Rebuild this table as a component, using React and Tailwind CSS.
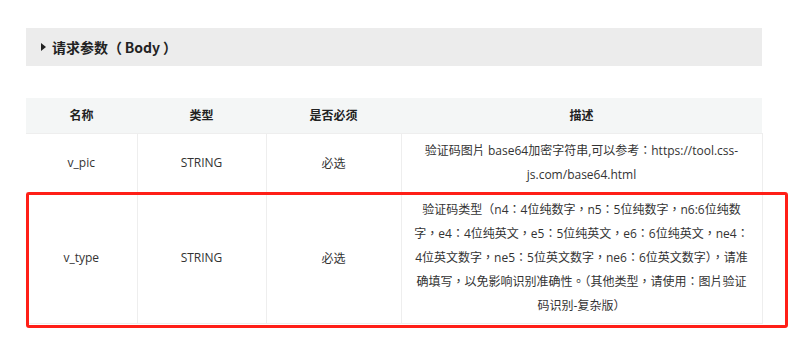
export default function App() {
  const font = { fontFamily: '"Noto Sans CJK SC", sans-serif' };
  const tc = { fontFamily: '"Open Sans", "Noto Sans CJK TC", sans-serif' };
  return (
    <div className="relative w-[799px] h-[340px] bg-white pt-[28px] pl-[26px] text-[#333]" style={font}>
      <div className="w-[736px] h-[38px] bg-[#ececec] flex items-center pl-[15px]">
        <span className="inline-block w-0 h-0 border-y-[4.5px] border-y-transparent border-l-[5px] border-l-[#222] mr-[6px]"></span>
        <span className="text-[14px] font-bold text-[#222] leading-none" style={{ fontFamily: '"Noto Sans CJK TC", sans-serif' }}>{"请求参数（\u2009Body\u2009）"}</span>
      </div>
      <table className="mt-[32px] w-[736px] border-collapse text-[12px] leading-[24px] text-center table-fixed">
        <colgroup>
          <col className="w-[111px]" />
          <col className="w-[129px]" />
          <col className="w-[135px]" />
          <col className="w-[361px]" />
        </colgroup>
        <thead>
          <tr className="bg-[#f4f6f6] h-[35px]">
            <th className="font-bold text-[#222] border-[#eeeeee] border-b">名称</th>
            <th className="font-bold text-[#222] border-[#eeeeee] border-b">类型</th>
            <th className="font-bold text-[#222] border-[#eeeeee] border-b">是否必须</th>
            <th className="font-bold text-[#222] border-[#eeeeee] border-b">描述</th>
          </tr>
        </thead>
        <tbody>
          <tr className="h-[59px]">
            <td className="border border-[#eeeeee] border-l-0" style={tc}>v_pic</td>
            <td className="border border-[#eeeeee]" style={tc}>STRING</td>
            <td className="border border-[#eeeeee]">必选</td>
            <td className="border border-[#eeeeee] py-[5px] px-[10px]" style={tc}>
              验证码图片 base64加密字符串,可以参考：https://tool.css-<br />js.com/base64.html
            </td>
          </tr>
          <tr className="h-[131px]">
            <td className="border border-[#eeeeee] border-l-0" style={tc}>v_type</td>
            <td className="border border-[#eeeeee]" style={tc}>STRING</td>
            <td className="border border-[#eeeeee]">必选</td>
            <td className="border border-[#eeeeee] py-[5px] px-[10px]" style={tc}>
              验证码类型（n4：4位纯数字，n5：5位纯数字，n6:6位纯数<br />
              字，e4：4位纯英文，e5：5位纯英文，e6：6位纯英文，ne4：<br />
              4位英文数字，ne5：5位英文数字，ne6：6位英文数字），请准<br />
              确填写，以免影响识别准确性。（其他类型，请使用：图片验证<br />
              码识别-复杂版）
            </td>
          </tr>
        </tbody>
      </table>
      <div className="absolute left-[26px] top-[192px] w-[762px] h-[136px] border-[3px] border-[#ff1f17] rounded-[3px]"></div>
    </div>
  );
}
